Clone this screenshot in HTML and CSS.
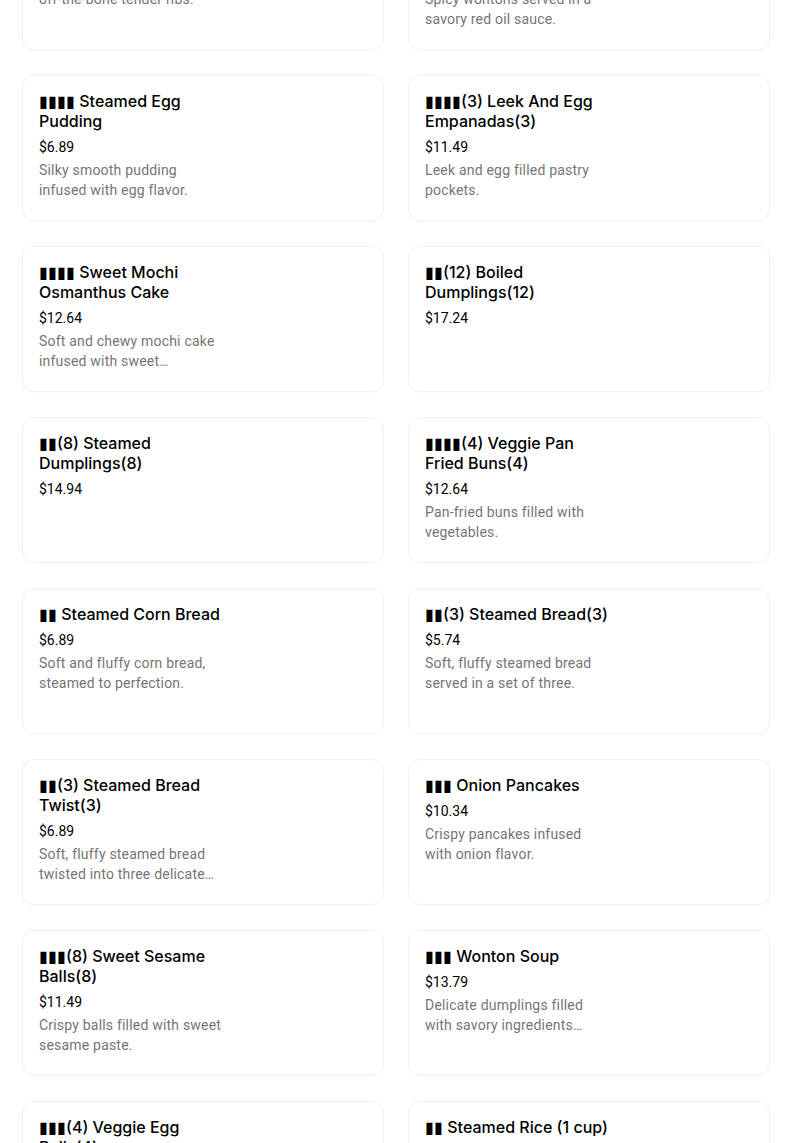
FILE: index.html
```html
<!DOCTYPE html>
<html lang="en">
<head>
<meta charset="utf-8">
<title>Menu</title>
<link rel="stylesheet" href="styles.css">
</head>
<body>
<main class="menu">
  <div class="grid">
    <article class="card"><div class="info"><h3 class="name">▮▮▮ Braised Pork Ribs</h3><div class="price">$15.54</div><p class="desc">Slow braised pork ribs, fall-off-the-bone tender ribs.</p></div></article>
    <article class="card"><div class="info"><h3 class="name">▮▮▮▮ Wontons In Chili Oil</h3><div class="price">$10.34</div><p class="desc">Spicy wontons served in a savory red oil sauce.</p></div></article>

    <article class="card"><div class="info"><h3 class="name">▮▮▮▮ Steamed Egg Pudding</h3><div class="price">$6.89</div><p class="desc">Silky smooth pudding infused with egg flavor.</p></div></article>
    <article class="card"><div class="info"><h3 class="name">▮▮▮▮(3) Leek And Egg Empanadas(3)</h3><div class="price">$11.49</div><p class="desc">Leek and egg filled pastry pockets.</p></div></article>

    <article class="card"><div class="info"><h3 class="name">▮▮▮▮ Sweet Mochi Osmanthus Cake</h3><div class="price">$12.64</div><p class="desc">Soft and chewy mochi cake infused with sweet osmanthus flowers.</p></div></article>
    <article class="card"><div class="info"><h3 class="name">▮▮(12) Boiled Dumplings(12)</h3><div class="price">$17.24</div></div></article>

    <article class="card"><div class="info"><h3 class="name">▮▮(8) Steamed Dumplings(8)</h3><div class="price">$14.94</div></div></article>
    <article class="card"><div class="info"><h3 class="name">▮▮▮▮(4) Veggie Pan Fried Buns(4)</h3><div class="price">$12.64</div><p class="desc">Pan-fried buns filled with vegetables.</p></div></article>

    <article class="card"><div class="info"><h3 class="name">▮▮ Steamed Corn Bread</h3><div class="price">$6.89</div><p class="desc">Soft and fluffy corn bread, steamed to perfection.</p></div></article>
    <article class="card"><div class="info"><h3 class="name">▮▮(3) Steamed Bread(3)</h3><div class="price">$5.74</div><p class="desc">Soft, fluffy steamed bread served in a set of three.</p></div></article>

    <article class="card"><div class="info"><h3 class="name">▮▮(3) Steamed Bread Twist(3)</h3><div class="price">$6.89</div><p class="desc">Soft, fluffy steamed bread twisted into three delicate strands.</p></div></article>
    <article class="card"><div class="info"><h3 class="name">▮▮▮ Onion Pancakes</h3><div class="price">$10.34</div><p class="desc">Crispy pancakes infused with onion flavor.</p></div></article>

    <article class="card"><div class="info"><h3 class="name">▮▮▮(8) Sweet Sesame Balls(8)</h3><div class="price">$11.49</div><p class="desc">Crispy balls filled with sweet sesame paste.</p></div></article>
    <article class="card"><div class="info"><h3 class="name">▮▮▮ Wonton Soup</h3><div class="price">$13.79</div><p class="desc">Delicate dumplings filled with savory ingredients simmered in a light broth.</p></div></article>

    <article class="card"><div class="info"><h3 class="name">▮▮▮(4) Veggie Egg Rolls(4)</h3><div class="price">$8.04</div><p class="desc">Crispy rolls filled with fresh vegetables.</p></div></article>
    <article class="card"><div class="info"><h3 class="name">▮▮ Steamed Rice (1 cup)</h3><div class="price">$2.29</div></div></article>
  </div>
</main>
</body>
</html>
```
FILE: styles.css
```css
html, body {
  margin: 0;
  padding: 0;
  background: #fff;
}
body {
  font-family: Inter, "Noto Sans", sans-serif;
  color: #000;
  overflow: hidden;
}
.menu {
  padding: 0 34px 0 22px;
}
.grid {
  margin-top: -96px;
  display: grid;
  grid-template-columns: 1fr 1fr;
  column-gap: 24px;
  row-gap: 25px;
}
.card {
  box-sizing: border-box;
  height: 146px;
  border: 1px solid #f1f1f1;
  border-radius: 12px;
  padding: 15px 16px 16px;
  box-shadow: 0 1px 2px rgba(0, 0, 0, 0.02);
}
.info {
  max-width: 186px;
}
.name {
  margin: 0;
  font-size: 16px;
  font-weight: 500;
  line-height: 20px;
  color: #000;
}
.price {
  margin-top: 6px;
  font-family: Roboto, sans-serif;
  font-size: 14px;
  line-height: 20px;
  color: #000;
}
.desc {
  margin: 3px 0 0;
  font-family: Roboto, sans-serif;
  font-size: 14px;
  line-height: 20px;
  letter-spacing: 0.2px;
  color: #757575;
  display: -webkit-box;
  -webkit-line-clamp: 2;
  -webkit-box-orient: vertical;
  overflow: hidden;
}
```
